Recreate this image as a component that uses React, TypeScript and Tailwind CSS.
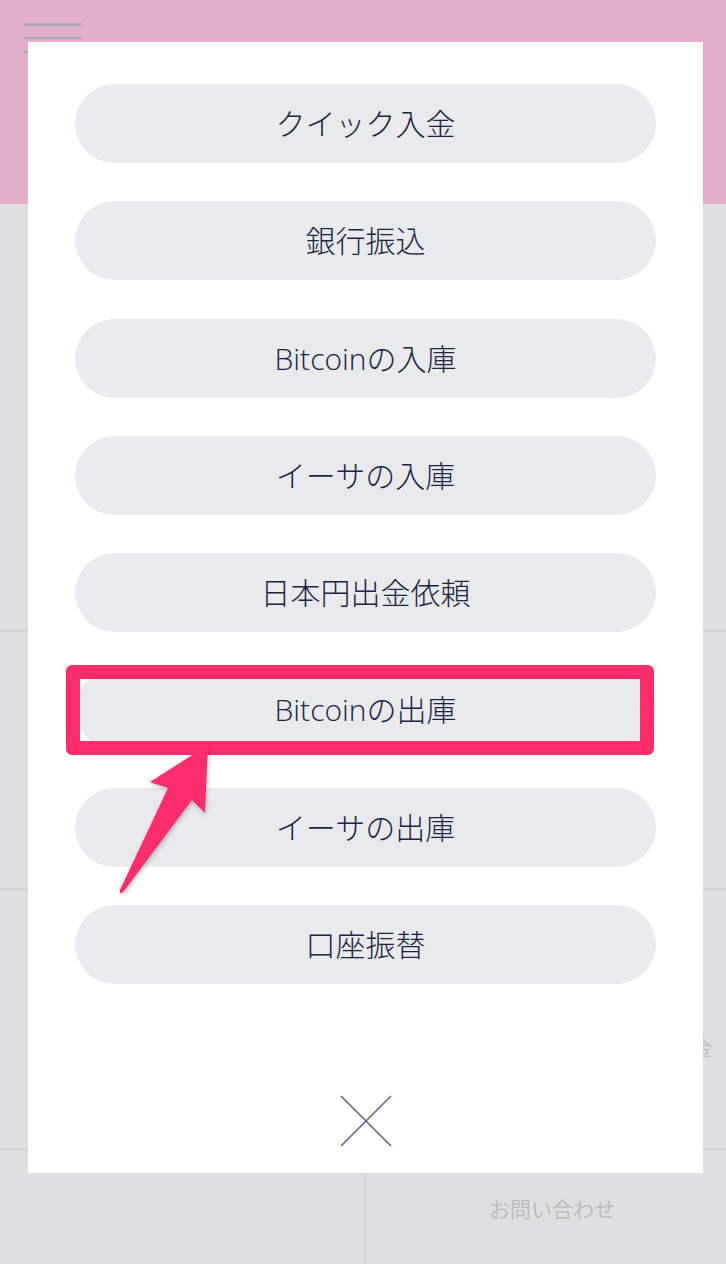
const items = [
  "クイック入金",
  "銀行振込",
  "Bitcoinの入庫",
  "イーサの入庫",
  "日本円出金依頼",
  "Bitcoinの出庫",
  "イーサの出庫",
  "口座振替",
];

function CloseIcon() {
  return (
    <svg width="52" height="52" viewBox="0 0 52 52" fill="none">
      <path d="M1 1L51 51M51 1L1 51" stroke="#5b6483" strokeWidth="1.6" />
    </svg>
  );
}

function Arrow() {
  return (
    <svg
      className="pointer-events-none absolute left-0 top-0 drop-shadow-[1px_2px_2px_rgba(0,0,0,0.25)]"
      width="726"
      height="1264"
      viewBox="0 0 726 1264"
    >
      <path
        d="M208 745 L205 813 L192 800 L124 891 Q119 896 120 890 L168 788 L150 782 Z"
        fill="#ff2d6e"
      />
    </svg>
  );
}

export default function App() {
  return (
    <div
      className="relative h-[1264px] w-[726px] overflow-hidden bg-[#dfdfe2]"
      style={{ fontFamily: '"Open Sans", "Noto Sans CJK JP", sans-serif' }}
    >
      {/* page behind the menu */}
      <div className="flex h-[204px] flex-col gap-[11px] bg-[#e2afcb] pl-6 pt-[23px]">
        <div className="h-[2.5px] w-[58px] bg-[#b1a9b1]" />
        <div className="h-[2.5px] w-[58px] bg-[#b1a9b1]" />
        <div className="h-[2.5px] w-[58px] bg-[#b1a9b1]" />
      </div>
      <div className="h-[428px] border-b-2 border-[#d2d2d6]" />
      <div className="h-[258px] border-b-2 border-[#d2d2d6]" />
      <div className="flex h-[260px] items-center justify-end border-b-2 border-[#d2d2d6] pr-[14px] pt-[60px]">
        <span className="text-[20px] text-[#b9bac5]">入出金</span>
      </div>
      <div className="grid h-[114px] grid-cols-[366px_1fr]">
        <div className="border-r-2 border-[#d2d2d6]" />
        <div className="flex items-center justify-center pl-[12px] pt-[6px] text-[21px] text-[#b9bac5]">
          お問い合わせ
        </div>
      </div>

      {/* menu */}
      <div className="absolute left-[28px] top-[42px] flex h-[1131px] w-[675px] flex-col bg-white px-[47px] pt-[42px] pb-[26px]">
        <div className="flex flex-col gap-[38.3px]">
          {items.map((label) => (
            <div
              key={label}
              className="flex h-[79px] items-center justify-center rounded-full bg-[#e9eaee] text-[30px] font-light text-[#1b2444]"
            >
              {label}
            </div>
          ))}
        </div>
        <div className="mt-auto flex justify-center">
          <CloseIcon />
        </div>
      </div>

      {/* highlight */}
      <div className="absolute left-[66px] top-[665px] h-[90px] w-[588px] rounded-[6px] border-[14px] border-[#ff2d6e]" />
      <Arrow />
    </div>
  );
}
